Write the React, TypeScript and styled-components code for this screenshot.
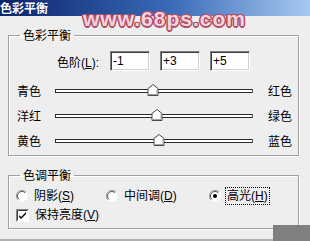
import React from 'react';
import styled, { createGlobalStyle } from 'styled-components';

const GlobalStyle = createGlobalStyle`
  html, body {
    margin: 0;
    padding: 0;
    background: #eeeeee;
    overflow: hidden;
  }
  * {
    box-sizing: border-box;
  }
`;

const FONT = `"Liberation Sans", "Noto Sans CJK SC", sans-serif`;

const Window = styled.div`
  position: relative;
  width: 310px;
  height: 241px;
  display: flex;
  flex-direction: column;
  background: #eeeeee;
  font-family: ${FONT};
  font-size: 12px;
  color: #000;
  overflow: hidden;
`;

const TitleBar = styled.div`
  height: 16px;
  flex: none;
  background: linear-gradient(to right, #0a246a 0%, #3a6ab8 55%, #a6caf0 100%);
  color: #fff;
  font-weight: bold;
  font-size: 12px;
  line-height: 16px;
  padding-left: 0;
  font-family: "Noto Sans CJK SC", sans-serif;
`;

const Watermark = styled.div`
  position: absolute;
  left: 83px;
  top: 9px;
  font-family: "Liberation Sans", sans-serif;
  font-weight: bold;
  font-size: 21px;
  line-height: 20px;
  letter-spacing: 1px;
  color: #f2d4de;
  text-shadow:
    1.5px 0 0 #b44d66, -1.5px 0 0 #b44d66, 0 1.5px 0 #b44d66, 0 -1.5px 0 #b44d66,
    1px 1px 0 #b44d66, -1px -1px 0 #b44d66, 1px -1px 0 #b44d66, -1px 1px 0 #b44d66;
  pointer-events: none;
`;

const Group = styled.fieldset<{ $top: number; $height: number }>`
  margin: ${({ $top }) => $top}px 11px 0 8px;
  height: ${({ $height }) => $height}px;
  flex: none;
  padding: 0 8px;
  border: 1px solid #a0a0a0;
  box-shadow: 1px 1px 0 #ffffff, inset 1px 1px 0 #ffffff;
  min-width: 0;
`;

const Legend = styled.legend`
  margin-left: 3px;
  padding: 0 3px;
  font-size: 12px;
  line-height: 14px;
  font-family: "Noto Sans CJK SC", sans-serif;
`;

const LevelRow = styled.div`
  display: flex;
  align-items: center;
  height: 20px;
  margin-top: 9px;
  margin-left: 40px;
  gap: 10px;
`;

const LevelLabel = styled.span`
  width: 43px;
  white-space: nowrap;
`;

const NumberBox = styled.input`
  width: 40px;
  height: 20px;
  padding: 0 0 0 2px;
  margin: 0;
  font-family: ${FONT};
  font-size: 12px;
  color: #000;
  background: #fff;
  border: 1px solid;
  border-color: #808080 #ffffff #ffffff #808080;
  box-shadow: inset 1px 1px 0 #404040, inset -1px -1px 0 #d4d0c8;
  outline: none;
`;

const SliderGrid = styled.div`
  display: grid;
  grid-template-columns: 38px 198px auto;
  grid-auto-rows: 25px;
  align-items: center;
  margin-top: 7px;
`;

const SideLabel = styled.span<{ $right?: boolean }>`
  padding-left: ${({ $right }) => ($right ? 15 : 0)}px;
  white-space: nowrap;
  font-family: "Noto Sans CJK SC", sans-serif;
`;

const Track = styled.div`
  position: relative;
  height: 4px;
  background: #fff;
  border: 1px solid #2a2a2a;
  border-right-color: #606060;
`;

const Thumb = styled.svg`
  position: absolute;
  top: -6px;
  width: 11px;
  height: 12px;
  transform: translateX(-50%);
  overflow: visible;
`;

const OptionRow = styled.div`
  display: grid;
  grid-template-columns: 90px 103px auto;
  align-items: center;
  height: 16px;
  margin-top: 5px;
  margin-left: -1px;
`;

const CheckRow = styled.div`
  display: flex;
  align-items: center;
  gap: 4px;
  height: 14px;
  margin-top: 5px;
  margin-left: -1px;
`;

const Option = styled.label`
  display: flex;
  align-items: center;
  gap: 4px;
  white-space: nowrap;
`;

const OptionText = styled.span<{ $focused?: boolean }>`
  padding: 1px 1px;
  border: 1px dotted ${({ $focused }) => ($focused ? '#000' : 'transparent')};
  line-height: 14px;
`;

const Footer = styled.div`
  flex: 1;
  display: flex;
  justify-content: flex-end;
  box-shadow: inset 0 -2px 0 #b0b0b0;
`;

const CornerBlock = styled.div`
  width: 37px;
  height: 16px;
  margin-top: -4px;
  background: #808080;
  align-self: flex-end;
`;

const sliders = [
  { left: '青色', right: '红色', value: -1 },
  { left: '洋红', right: '绿色', value: 3 },
  { left: '黄色', right: '蓝色', value: 5 },
];

const SliderThumb = ({ value }: { value: number }) => (
  <Thumb
    viewBox="0 0 11 12"
    style={{ left: `${((value + 100) / 200) * 100}%` }}
  >
    <path d="M0.5 11.5 V4.5 L5.5 0.5 L10.5 4.5 V11.5 Z" fill="#ffffff" stroke="#4a4a4a" />
    <path d="M9.5 5 V10.5 H1.5" fill="none" stroke="#a0a0a0" />
  </Thumb>
);

const Radio = ({ checked }: { checked?: boolean }) => (
  <svg width="12" height="12" viewBox="0 0 12 12">
    <circle cx="6" cy="6" r="5.5" fill="#ffffff" />
    <path d="M10 2 A5.5 5.5 0 0 0 2 10" fill="none" stroke="#9a9a9a" strokeWidth="1" />
    <path d="M9.2 2.8 A4.5 4.5 0 0 0 2.8 9.2" fill="none" stroke="#505050" strokeWidth="1" />
    {checked && <circle cx="6" cy="6" r="2" fill="#000" />}
  </svg>
);

const Checkbox = ({ checked }: { checked?: boolean }) => (
  <svg width="13" height="13" viewBox="0 0 13 13">
    <rect x="0" y="0" width="13" height="13" fill="#ffffff" />
    <path d="M0.5 12.5 V0.5 H12.5" fill="none" stroke="#808080" />
    <path d="M1.5 11.5 V1.5 H11.5" fill="none" stroke="#404040" />
    {checked && (
      <path d="M3 6 L5 8 L10 3 V5 L5 10 L3 8 Z" fill="#000" />
    )}
  </svg>
);

export default function App() {
  return (
    <>
      <GlobalStyle />
      <Window>
        <TitleBar>色彩平衡</TitleBar>

        <Group $top={12} $height={128}>
          <Legend>色彩平衡</Legend>
          <LevelRow>
            <LevelLabel>
              色阶(<u>L</u>):
            </LevelLabel>
            <NumberBox readOnly value="-1" />
            <NumberBox readOnly value="+3" />
            <NumberBox readOnly value="+5" />
          </LevelRow>
          <SliderGrid>
            {sliders.map((s) => (
              <React.Fragment key={s.left}>
                <SideLabel>{s.left}</SideLabel>
                <Track>
                  <SliderThumb value={s.value} />
                </Track>
                <SideLabel $right>{s.right}</SideLabel>
              </React.Fragment>
            ))}
          </SliderGrid>
        </Group>

        <Group $top={12} $height={61}>
          <Legend>色调平衡</Legend>
          <OptionRow>
            <Option>
              <Radio />
              <OptionText>
                阴影(<u>S</u>)
              </OptionText>
            </Option>
            <Option>
              <Radio />
              <OptionText>
                中间调(<u>D</u>)
              </OptionText>
            </Option>
            <Option>
              <Radio checked />
              <OptionText $focused>
                高光(<u>H</u>)
              </OptionText>
            </Option>
          </OptionRow>
          <CheckRow>
            <Checkbox checked />
            <OptionText>
              保持亮度(<u>V</u>)
            </OptionText>
          </CheckRow>
        </Group>

        <Footer>
          <CornerBlock />
        </Footer>

        <Watermark>www.68ps.com</Watermark>
      </Window>
    </>
  );
}
